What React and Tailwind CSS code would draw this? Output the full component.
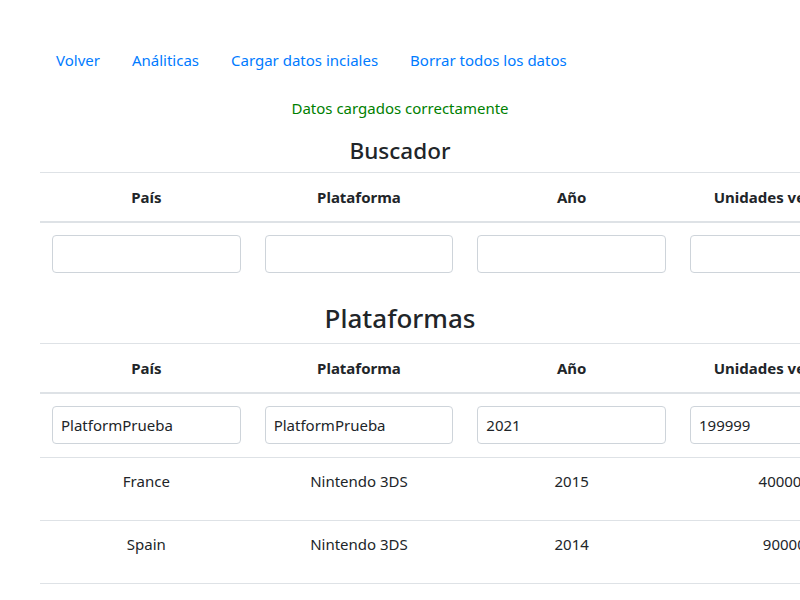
import React from "react";

const cols = ["País", "Plataforma", "Año", "Unidades vendidas", "Acciones"];

function HeadRow() {
  return (
    <thead>
      <tr>
        {cols.map((c) => (
          <th
            key={c}
            className="w-[212.67px] px-3 py-3 text-center font-bold text-[#212529] border-t border-b-2 border-[#dee2e6] whitespace-nowrap"
          >
            {c}
          </th>
        ))}
      </tr>
    </thead>
  );
}

function Input({ value }) {
  return (
    <input
      defaultValue={value}
      className="block w-full h-[38px] px-2 border border-[#ced4da] rounded-[4px] text-[15px] text-[#212529] bg-white outline-none"
    />
  );
}

function InputRow({ values, extra }) {
  return (
    <tr>
      {values.map((v, i) => (
        <td key={i} className={"px-3 border-t border-[#dee2e6] align-top " + (extra ? "pt-3 pb-[13px]" : "py-3")}>
          {i < 4 ? <Input value={v} /> : <div className="h-[38px]" />}
        </td>
      ))}
    </tr>
  );
}

const data = [
  ["France", "Nintendo 3DS", "2015", "400000"],
  ["Spain", "Nintendo 3DS", "2014", "90000"],
];

export default function App() {
  return (
    <div
      className="w-[800px] h-[600px] overflow-hidden bg-white text-[15px] leading-6 text-[#212529]"
      style={{ fontFamily: '"Segoe UI", "Noto Sans", sans-serif' }}
    >
      <div className="pt-10 px-10">
        <nav className="flex">
          {["Volver", "Análiticas", "Cargar datos inciales", "Borrar todos los datos"].map((l) => (
            <a key={l} href="#" className="px-4 py-2 text-[#007bff] whitespace-nowrap">
              {l}
            </a>
          ))}
        </nav>
        <p className="mt-4 mb-4 text-center text-[#008000]">Datos cargados correctamente</p>
        <h4 className="text-center text-[22.5px] leading-[26px] pt-[2px] font-medium mb-2">Buscador</h4>
        <table className="table-fixed border-collapse w-[1063.35px] mb-4">
          <HeadRow />
          <tbody>
            <InputRow values={["", "", "", "", ""]} />
          </tbody>
        </table>
        <h3 className="text-center text-[26px] leading-[31.6px] pt-[2px] font-medium mb-2">Plataformas</h3>
        <table className="table-fixed border-collapse w-[1063.35px] mb-4">
          <HeadRow />
          <tbody>
            <InputRow values={["PlatformPrueba", "PlatformPrueba", "2021", "199999", ""]} extra />
            {data.map((r, i) => (
              <tr key={i}>
                {r.map((c, j) => (
                  <td key={j} className="px-3 py-3 text-center border-t border-b border-[#dee2e6] align-top">
                    <div className="h-[38px] leading-[38px] -mt-[8px]">{c}</div>
                  </td>
                ))}
                <td className="px-3 py-3 border-t border-b border-[#dee2e6]">
                  <div className="h-[38px]" />
                </td>
              </tr>
            ))}
          </tbody>
        </table>
      </div>
    </div>
  );
}
